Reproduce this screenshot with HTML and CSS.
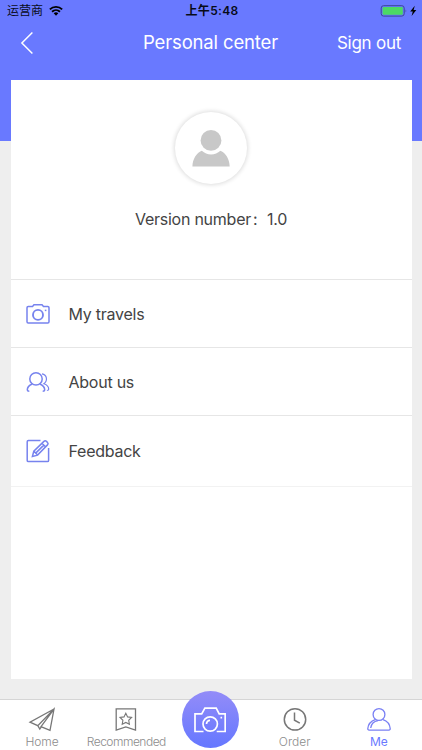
FILE: index.html
```html
<!DOCTYPE html>
<html lang="en">
<head>
    <meta charset="UTF-8">
    <meta name="viewport" content="width=device-width, initial-scale=1.0">
    <title>Personal center</title>
    <link rel="stylesheet" href="styles.css">
</head>
<body>
    <div class="page">
        <header class="header">
            <div class="status-bar">
                <div class="carrier">
                    <span>运营商</span>
                    <svg width="14" height="11" viewBox="0 0 14 11">
                        <path d="M0.2 3.7a9.8 9.8 0 0 1 13.6 0l-1.3 1.4a7.9 7.9 0 0 0-11 0z"/>
                        <path d="M2.4 6a6.7 6.7 0 0 1 9.2 0l-1.3 1.4a4.8 4.8 0 0 0-6.6 0z"/>
                        <path d="M4.7 8.3a3.4 3.4 0 0 1 4.6 0L7 10.7z"/>
                    </svg>
                </div>
                <div class="time">上午5:48</div>
                <div class="battery">
                    <svg width="37" height="12" viewBox="0 0 37 12">
                        <rect x="1.2" y="0.7" width="23" height="10.4" rx="2.4" fill="none" stroke="#3c4697"/>
                        <rect x="2.6" y="2" width="20.2" height="7.8" rx="1" fill="#4cd964"/>
                        <path d="M25.6 4.2q1.4 1.7 0 3.4z" fill="#3c4697"/>
                        <path d="M34.8 0.8L30.2 6.5h2.6l-1.2 4.4L36.3 5h-2.7z"/>
                    </svg>
                </div>
            </div>
            <nav class="nav-bar">
                <svg class="back" width="14" height="24" viewBox="0 0 14 24">
                    <path d="M12.4 1.5L1.9 12l10.5 10.5"/>
                </svg>
                <h1>Personal center</h1>
                <a class="sign-out">Sign out</a>
            </nav>
        </header>

        <main class="card">
            <section class="profile">
                <div class="avatar">
                    <svg width="38" height="38" viewBox="0 0 38 38">
                        <circle cx="19" cy="11.4" r="10.4"/>
                        <path d="M0.4 37.4c0.4-7.6 4-13.3 9.4-15.6a13.6 13.6 0 0 0 18.6 0c5.4 2.3 8.9 8 9.3 15.6z"/>
                    </svg>
                </div>
                <p class="version">Version number<span class="colon">:</span>1.0</p>
            </section>
            <ul class="menu">
                <li class="travels">
                    <svg width="24" height="24" viewBox="0 0 24 24">
                        <path d="M2.2 4.6h4.3l1.5-1.8h8l1.5 1.8h4.3q1.2 0 1.2 1.2v14q0 1.2-1.2 1.2H2.2q-1.2 0-1.2-1.2v-14q0-1.2 1.2-1.2z"/>
                        <circle cx="12" cy="12.9" r="5" stroke-width="1.9"/>
                        <path d="M18.8 8.4h1.6"/>
                    </svg>
                    <span>My travels</span>
                </li>
                <li class="about">
                    <svg width="24" height="24" viewBox="0 0 24 24">
                        <circle cx="10" cy="8.9" r="6.2"/>
                        <path d="M6.2 14c-3.2 1.3-4.9 3.5-4.9 6 0 .9.8 1.2 2 1.2M13.8 14c3.2 1.3 4.9 3.5 4.9 6 0 .9-.8 1.2-2 1.2"/>
                        <path d="M16 3.8c5 .8 6 6.8 1.9 10 3 1 4.8 3 4.8 5.5 0 .8-.7 1.2-1.8 1.2" stroke-width="1.2"/>
                    </svg>
                    <span>About us</span>
                </li>
                <li class="feedback">
                    <svg width="24" height="24" viewBox="0 0 24 24">
                        <path d="M14.5 1.6H2.4q-1.2 0-1.2 1.2v18.6q0 1.2 1.2 1.2h19q1.2 0 1.2-1.2V9"/>
                        <path d="M6.4 17.5l1.4-5.3L17.9 2.4q1.3-1.2 2.6 0l1 1q1.2 1.3 0 2.5L11.6 16.1zM16 4.3l3.7 3.7M8 12.3l3.5 3.6M9.7 14.1l8.1-8"/>
                    </svg>
                    <span>Feedback</span>
                </li>
            </ul>
        </main>

        <footer class="tab-bar">
            <a class="tab">
                <svg width="28" height="26" viewBox="0 0 28 26">
                    <path d="M26 2L2 15.2l7.8 3.4L26 2l-4 21.3-9-3.6L26 2M9.8 18.6l2 3.5 1.5-2.3"/>
                </svg>
                <span>Home</span>
            </a>
            <a class="tab recommended">
                <svg width="28" height="26" viewBox="0 0 28 26">
                    <path d="M4.2 1.8h19.3v21.3L13.8 20l-9.6 3.1z"/>
                    <path d="M13.8 6.2l1.8 3.7 4 .6-2.9 2.8.7 4-3.6-1.9-3.6 1.9.7-4L8 10.5l4-.6z" stroke-width="1.1"/>
                </svg>
                <span>Recommended</span>
            </a>
            <a class="tab camera">
                <span class="camera-button">
                    <svg width="32" height="26" viewBox="0 0 32 26">
                        <path d="M9.5 24.5H1V6.8h6.7l3.2-5.6h11.3l3 5.6h6v17.7h-8.5"/>
                        <circle cx="16.2" cy="17" r="7.2"/>
                        <path d="M12.5 17c0-2.2 1.5-3.6 3.5-3.6M26.5 10.6h1.6"/>
                    </svg>
                </span>
            </a>
            <a class="tab">
                <svg width="28" height="26" viewBox="0 0 28 26">
                    <circle cx="14" cy="12.4" r="10.7" stroke-width="1.5"/>
                    <path d="M13.5 5.5v7.7l5.3 3" stroke-width="1.5"/>
                </svg>
                <span>Order</span>
            </a>
            <a class="tab active">
                <svg width="28" height="26" viewBox="0 0 28 26">
                    <circle cx="14" cy="7.5" r="5.9"/>
                    <path d="M10.3 12.6C6 14 3.2 17.5 2.8 21.5q-.1 1.6 1.3 1.6h19.8q1.4 0 1.3-1.6c-.4-4-3-7.5-7.2-8.9M5.7 21c.5-4 3-6.7 7.3-7.4"/>
                </svg>
                <span>Me</span>
            </a>
        </footer>
    </div>
</body>
</html>
```
FILE: styles.css
```css
* {
    box-sizing: border-box;
}
body {
    margin: 0;
    font-family: Inter, "Noto Sans CJK SC", sans-serif;
    background: #eeeeee;
    color: #444444;
}
.page {
    height: 750px;
    display: flex;
    flex-direction: column;
    overflow: hidden;
}
svg {
    display: block;
    flex: none;
}
.header {
    height: 141px;
    flex: none;
    background: #6979ff;
}
.status-bar {
    height: 21px;
    padding: 0 5px 0 7px;
    display: grid;
    grid-template-columns: 1fr auto 1fr;
    align-items: center;
    color: #080b18;
    font-size: 12px;
    line-height: 21px;
}
.carrier {
    display: flex;
    align-items: center;
    gap: 6px;
}
.time {
    font-weight: 600;
    letter-spacing: 0.3px;
}
.battery {
    justify-self: end;
}
.nav-bar {
    height: 43px;
    padding: 0 21px 0 20px;
    display: grid;
    grid-template-columns: 1fr auto 1fr;
    align-items: center;
    color: #ffffff;
}
.back {
    fill: none;
    stroke: #ffffff;
    stroke-width: 1.5;
}
.nav-bar h1 {
    margin: 0 0 2px;
    font-size: 18.5px;
    font-weight: 400;
    letter-spacing: -0.15px;
}
.sign-out {
    justify-self: end;
    font-size: 17px;
    letter-spacing: -0.25px;
}
.card {
    width: 401px;
    height: 599px;
    flex: none;
    margin: -61px 0 20px 10.5px;
    background: #ffffff;
}
.profile {
    height: 199px;
    padding-top: 32px;
    display: flex;
    flex-direction: column;
    align-items: center;
}
.avatar {
    width: 72px;
    height: 72px;
    display: flex;
    align-items: center;
    justify-content: center;
    border-radius: 50%;
    box-shadow: 0 0 4px 1px #dddddd;
    fill: #c8c8c8;
}
.version {
    margin: 25px 0 0;
    font-size: 16px;
    line-height: 20px;
    letter-spacing: -0.25px;
}
.colon {
    display: inline-block;
    width: 16px;
    padding-left: 2px;
}
.menu {
    margin: 0;
    padding: 0;
    list-style: none;
}
.menu li {
    height: 68px;
    padding-left: 15px;
    display: flex;
    align-items: center;
    gap: 19px;
    border-top: 1px solid #e6e6e6;
    font-size: 16px;
    letter-spacing: -0.25px;
}
.menu .feedback {
    height: 72px;
    border-bottom: 1px solid #f2f2f2;
}
.menu svg {
    fill: none;
    stroke: #7783ee;
    stroke-width: 1.5;
}
.tab-bar {
    height: 51px;
    flex: none;
    padding-right: 1px;
    display: grid;
    grid-template-columns: repeat(5, 1fr);
    background: #ffffff;
    border-top: 1px solid #d5d5d5;
    font-size: 12px;
}
.tab {
    padding-top: 7px;
    display: flex;
    flex-direction: column;
    align-items: center;
    color: #8c8c8c;
    font-weight: 300;
    line-height: 18px;
}
.tab svg {
    fill: none;
    stroke: #777777;
    stroke-width: 1.3;
}
.recommended {
    letter-spacing: -0.5px;
}
.tab.active {
    color: #6979ff;
    font-weight: 400;
}
.tab.active svg {
    stroke: #7a80f4;
}
.tab.camera {
    padding: 0;
}
.camera-button {
    width: 57px;
    height: 57px;
    flex: none;
    margin-top: -9px;
    display: flex;
    align-items: center;
    justify-content: center;
    border-radius: 50%;
    background: linear-gradient(#938cf8, #6577ff);
}
.camera-button svg {
    stroke: #ffffff;
    stroke-width: 1.7;
}
```
